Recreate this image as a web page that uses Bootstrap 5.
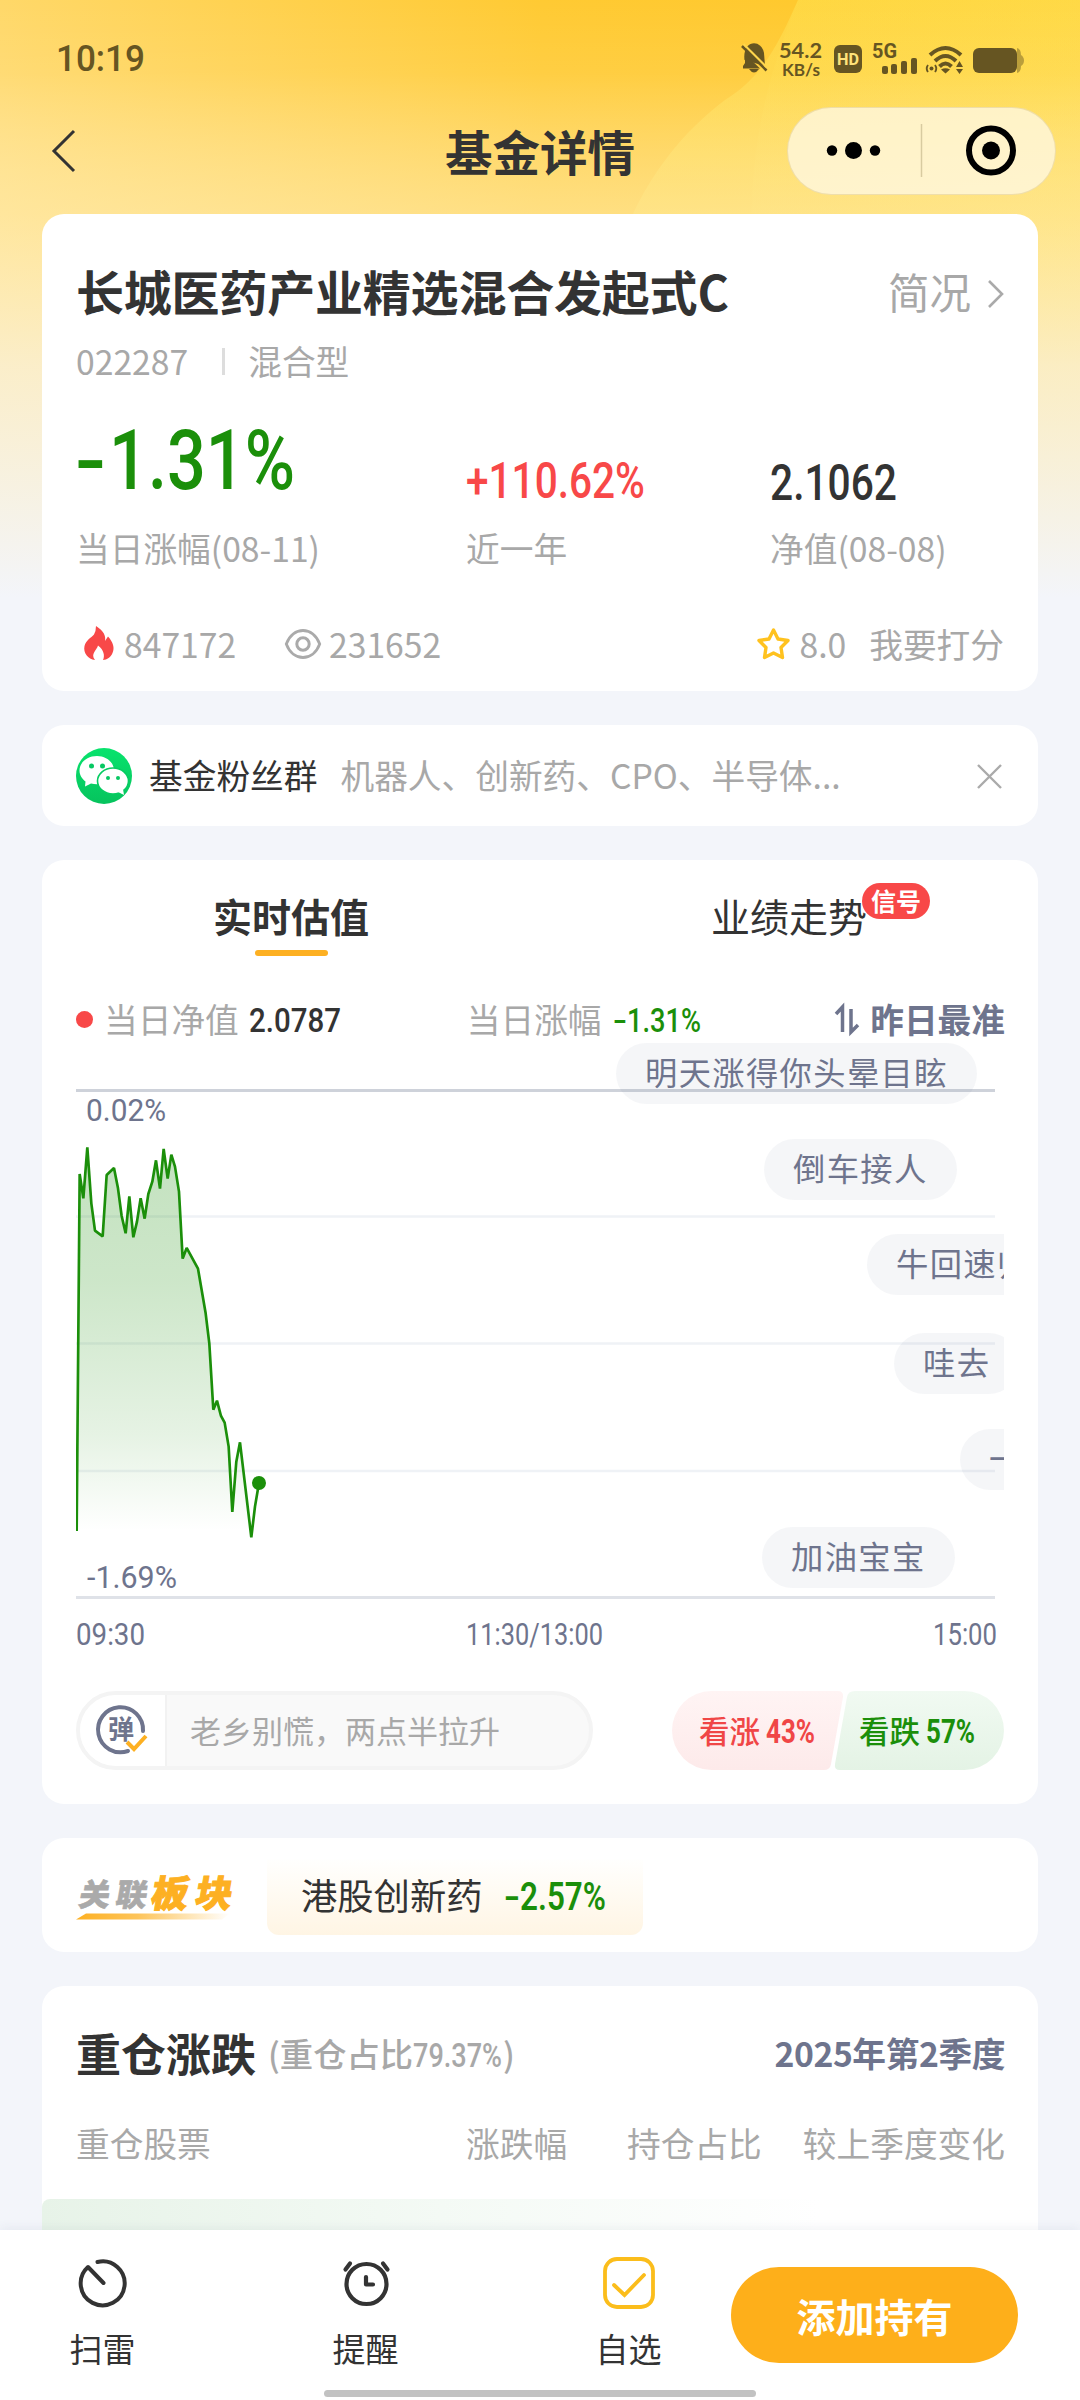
<!DOCTYPE html>
<html lang="zh-CN">
<head>
<meta charset="utf-8">
<meta name="viewport" content="width=device-width, initial-scale=1">
<title>基金详情</title>
<link href="https://cdn.jsdelivr.net/npm/bootstrap@5.3.0/dist/css/bootstrap.min.css" rel="stylesheet">
<script src="https://cdn.jsdelivr.net/npm/bootstrap@5.3.0/dist/js/bootstrap.bundle.min.js"></script>
<style>
  body{margin:0;background:#f3f5fa;font-family:"Noto Sans CJK SC",sans-serif;color:#333;font-size:33.7px;line-height:46px}
  .screen{width:1080px;height:2400px;overflow:hidden;position:relative}
  .backdrop{position:absolute;left:0;top:0;z-index:0}
  .content{position:relative;z-index:1}
  svg{display:block;flex:none;overflow:visible}
  .num text{font-family:Roboto,sans-serif;font-weight:500}
  .num.axis text{font-weight:400;fill:#6e748d}
  .statusbar{height:107px;padding:45px 0 0 57px}
  .titlebar{height:88px;padding:0 24px 0 50px}
  .page-title{font-size:47.5px;line-height:60px;font-weight:700}
  .capsule{width:269px;height:88px;border-radius:44px;background:rgba(255,248,224,.8);border:1.5px solid rgba(190,160,70,.25)}
  .panel{width:996px;margin:0 auto 34px;background:#fff;border-radius:22px;border:0;padding:0 34px}
  .panel-fund{margin-top:19px;height:477px;padding-top:38px}
  .fund-name{font-size:48px;line-height:76px;font-weight:700;letter-spacing:-.2px}
  .muted{color:#a8a8a8}
  .slate{color:#6e748d}
  .brief{font-size:41.5px;padding-top:2px}
  .metrics{height:182px}
  .metrics .lbl{height:50px;line-height:47px;margin-left:-1px}
  .panel-group{height:101px;margin-bottom:34px}
  .panel-chart{height:944px}
  .tabs{margin:0 -34px;height:112px;font-size:39px}
  .tabs .tab{width:50%;position:relative;line-height:111px;text-align:center}
  .tab.active{font-weight:700}
  .tab.active::after{content:"";position:absolute;left:213px;top:90px;width:73px;height:6px;border-radius:3px;background:#fdb022}
  .signal{position:absolute;left:322px;top:23px;width:68px;height:36px;border-radius:18px;background:#f84848;color:#fff;font-size:25px;line-height:34px;font-weight:700}
  .legend{height:46px;margin-top:25px}
  .live-dot{width:17px;height:17px;border-radius:50%;background:#f84848}
  .chart{height:562px;position:relative;overflow:hidden}
  .bullet{position:absolute;height:61px;line-height:56px;border-radius:31px;background:rgba(107,115,144,.065);color:#6e748d;padding:0 29px;font-size:32.3px;letter-spacing:1.35px;white-space:nowrap}
  .axisrow{height:58px}
  .comment{width:517px;height:79px;border-radius:40px;border:4px solid #f4f4f4;background:#f9f9f9;overflow:hidden;font-size:31px}
  .comment .mode{width:87px;height:71px;background:#fff;border-right:2px solid #f2f2f2}
  .vote{width:332px;height:79px;position:relative}
  .vote .side{position:relative;font-size:30.5px;font-weight:500}
  .vote-shape{position:absolute;left:0;top:0}
  .up{color:#f04646}.down{color:#1b8f0a}
  .panel-sector{height:114px}
  .sector-chip{width:376px;height:76px;border-radius:0 0 12px 12px;background:linear-gradient(#fffffe,#fff5e4);margin:3px 0 0 32px;padding-left:34px;font-size:36.3px}
  .panel-hold{height:500px;padding:0}
  .hold-title{font-size:45px;font-weight:700;line-height:60px}
  .hold-row{height:80px;background:linear-gradient(90deg,#e7f3e8,#f4faf5 40%,#fff 78%);border-radius:8px 0 0 0}
  .tabbar-bottom{position:absolute;left:0;bottom:0;width:1080px;height:170px;background:#fff;box-shadow:0 -2px 10px rgba(60,70,110,.07);z-index:3}
  .tool{padding-top:24px}
  .tool div{font-size:33px;line-height:46px;margin-top:15px}
  .btn-hold{width:287px;height:96px;border-radius:48px;background:#feaf1a;color:#fff;font-size:39px;font-weight:700;margin-top:37px;padding:0;line-height:88px;border:0}
  .home-line{position:absolute;left:324px;bottom:3px;width:432px;height:7px;border-radius:4px;background:#c2c2c2}
</style>
</head>
<body>
<div class="screen">
  <svg class="backdrop" width="1080" height="610" viewBox="0 0 1080 610">
    <defs>
      <linearGradient id="warm" x1="0" y1="0" x2="1" y2="0"><stop offset="0" stop-color="#ffd869"/><stop offset=".5" stop-color="#ffca33"/><stop offset=".75" stop-color="#ffc92e"/><stop offset="1" stop-color="#ffce38"/></linearGradient>
      <linearGradient id="fade" x1="0" y1="0" x2="0" y2="1"><stop offset="0" stop-color="#fff" stop-opacity="0"/><stop offset=".12" stop-color="#fff" stop-opacity=".08"/><stop offset=".35" stop-color="#fff4d0" stop-opacity=".5"/><stop offset=".6" stop-color="#faf2dc" stop-opacity=".84"/><stop offset=".98" stop-color="#f3f5fa"/></linearGradient>
      <linearGradient id="arc" x1="0" y1="0" x2="0" y2="1"><stop offset="0" stop-color="#ffe04e" stop-opacity=".55"/><stop offset="1" stop-color="#ffe04e" stop-opacity=".1"/></linearGradient>
    </defs>
    <rect width="1080" height="610" fill="url(#warm)"/>
    <path d="M798 0C780 40 765 75 725 100C685 130 640 180 615 260V610H1080V0Z" fill="url(#arc)"/>
    <path d="M798 0C762 90 748 160 752 260V610H1080V0Z" fill="url(#arc)" opacity=".3"/>
    <rect width="1080" height="610" fill="url(#fade)"/>
  </svg>

  <div class="content">
    <header>
      <div class="statusbar d-flex align-items-start">
        <svg class="num" width="87" height="26"><text x="-1" y="26" font-size="36" textLength="89" lengthAdjust="spacingAndGlyphs" fill="#665522">10:19</text></svg>
        <svg width="320" height="60" viewBox="720 20 320 60" style="margin:-25px 0 0 576px" fill="#665522">
          <path d="M744.500 60C742 40 761 38 764 53L765 66Z"/>
          <path d="M743 68.500V66L745 63V54L760 68.500ZM749 69H759Q754 76 749 69Z"/>
          <path d="M742 46L766.500 70.500" stroke="#665522" stroke-width="2.600"/>
          <path d="M743.500 44L767 67.500" stroke="#ffd64c" stroke-width="2"/>
          <text x="779" y="57.500" font-family="Lato,sans-serif" font-weight="700" font-size="21.500" textLength="43" lengthAdjust="spacingAndGlyphs">54.2</text>
          <text x="782" y="76" font-family="Lato,sans-serif" font-weight="700" font-size="17.500" textLength="38" lengthAdjust="spacingAndGlyphs">KB/s</text>
          <rect x="834" y="45" width="28" height="28" rx="6"/>
          <text x="837" y="65" font-family="Roboto,sans-serif" font-weight="700" font-size="17" fill="#ffe27a" textLength="22" lengthAdjust="spacingAndGlyphs">HD</text>
          <text x="872" y="58" font-family="Roboto,sans-serif" font-weight="700" font-size="20" textLength="25" lengthAdjust="spacingAndGlyphs">5G</text>
          <rect x="882" y="66" width="6" height="8" rx="2"/><rect x="891" y="64" width="6" height="10" rx="2"/><rect x="901" y="61" width="6" height="13" rx="2"/><rect x="911" y="58" width="6" height="16" rx="2"/>
          <g fill="none" stroke="#665522" stroke-width="4"><path d="M930 55Q945.500 41 961 55"/><path d="M935 61Q945.500 51 956 61"/><path d="M939.500 66.500Q945.500 60.500 951.500 66.500"/></g>
          <path d="M941 69.500Q945.500 67 950 69.500L945.500 73.500ZM956 67L959.500 61L963 67ZM956 69L959.500 74L963 69Z"/>
          <circle cx="931.500" cy="68.500" r="2"/>
          <path d="M928 65Q925.500 68.500 928 72M935 65Q937.500 68.500 935 72" fill="none" stroke="#665522" stroke-width="1.800"/>
          <rect x="973" y="48" width="44" height="25" rx="6"/>
          <path d="M1017 48Q1021 49 1021 55Q1024 57 1024 60.500T1021 66Q1021 72 1017 73Z" opacity=".45"/>
        </svg>
      </div>
      <div class="titlebar d-flex align-items-center">
        <svg width="26" height="44" viewBox="0 0 26 44"><path d="M24 2L4 22L24 42" fill="none" stroke="#333" stroke-width="3"/></svg>
        <div class="page-title" style="margin-left:369px">基金详情</div>
        <div class="capsule ms-auto">
          <svg width="266" height="85" viewBox="788 109 266 85"><circle cx="832" cy="151.500" r="5.200"/><circle cx="853.500" cy="151.500" r="8.500"/><circle cx="875" cy="151.500" r="5.200"/><path d="M921.500 125V178" stroke="#d8cba0" stroke-width="1.500"/><circle cx="991" cy="151.500" r="22" fill="none" stroke="#000" stroke-width="6"/><circle cx="991" cy="151.500" r="9"/></svg>
        </div>
      </div>
    </header>

    <section class="card panel panel-fund">
      <div class="d-flex justify-content-between align-items-center">
        <div class="fund-name">长城医药产业精选混合发起式C</div>
        <div class="d-flex align-items-center muted brief">简况
          <svg width="17" height="30" class="ms-3 me-0" viewBox="0 0 17 30" style="margin-top:5px"><path d="M2 2L15 15L2 28" fill="none" stroke="#aaa" stroke-width="2.600"/></svg></div>
      </div>
      <div class="d-flex align-items-center muted" style="height:64px;padding-top:2px">
        <span>022287</span><span style="width:3px;height:27px;background:#ddd;margin:0 23px 0 34px"></span><span>混合型</span>
      </div>
      <div class="metrics d-flex align-items-end muted">
        <div style="width:391px">
          <svg class="num" width="217" height="60" style="margin:0 0 35px 3px"><text x="-4" y="60" font-size="84" textLength="31" lengthAdjust="spacingAndGlyphs" fill="#1b8f0a" style="font-weight:500">-</text><text x="30" y="60" font-size="84" textLength="186" lengthAdjust="spacingAndGlyphs" fill="#1b8f0a" style="font-weight:500">1.31%</text></svg>
          <div class="lbl" style="margin-left:0">当日涨幅(08-11)</div></div>
        <div style="width:304px">
          <svg class="num" width="177" height="35" style="margin-bottom:26px"><text x="-1" y="35" font-size="49.500" textLength="179" lengthAdjust="spacingAndGlyphs" fill="#f84848">+110.62%</text></svg>
          <div class="lbl">近一年</div></div>
        <div>
          <svg class="num" width="125" height="35" style="margin-bottom:24px"><text x="-1" y="35" font-size="49.500" textLength="127" lengthAdjust="spacingAndGlyphs" fill="#333">2.1062</text></svg>
          <div class="lbl">净值(08-08)</div></div>
      </div>
      <div class="d-flex align-items-center muted" style="height:60px;margin-top:40px">
        <svg width="30" height="35" viewBox="0 0 30 35" style="margin:-2px 10px 0 8px"><path d="M12 0C20 5 22 10 21 15L24 10.500C29 16 31 22 28.500 27C27 31 23 34 19 34C21 30 20 24 14 19.500C13 24 6 28 11 34C4 33 -1 27 .5 20C2 14 7 12 10 8.500Q12 5 12 0Z" fill="#f84848"/></svg>
        <span style="width:161px">847172</span>
        <svg width="36" height="28" viewBox="0 0 36 28" fill="none" stroke="#aaa" stroke-width="2.800"><path d="M1.300 14C8 -4 28 -4 34.700 14C28 32 8 32 1.300 14Z"/><circle cx="18" cy="14" r="6.200" stroke-width="3"/></svg>
        <span style="margin-left:8px">231652</span>
        <svg class="ms-auto" width="33" height="32" viewBox="0 0 33 32"><path d="M16.500 2L21 11L31 12.500L24 19.500L25.500 29.500L16.500 25L7.500 29.500L9 19.500L2 12.500L12 11Z" fill="none" stroke="#ffc21f" stroke-width="3.400" stroke-linejoin="round"/></svg>
        <span style="margin:0 23px 0 9px">8.0</span><span>我要打分</span>
      </div>
    </section>

    <section class="card panel panel-group flex-row align-items-center">
      <svg width="56" height="56" viewBox="0 0 56 56"><defs><linearGradient id="wx" x2="0" y2="1"><stop stop-color="#08e36d"/><stop offset="1" stop-color="#06c35d"/></linearGradient></defs>
        <circle cx="28" cy="28" r="28" fill="url(#wx)"/><path d="M21 8C11 8 3.500 14.500 3.500 22.500C3.500 27 6 31 9.500 33.500L9 38.500L15 35.500C28 38.500 38 31 38 22.500C38 14 30 8 21 8Z" fill="#fff"/>
        <ellipse cx="37" cy="33" rx="15.500" ry="13" fill="#fff" stroke="#06cc62" stroke-width="1.600"/><path d="M42 44L48 47L47 41Z" fill="#fff"/>
        <g fill="#07c862"><circle cx="15.500" cy="18" r="2.500"/><circle cx="26.500" cy="18" r="2.500"/><circle cx="32" cy="30" r="2"/><circle cx="42" cy="30" r="2"/></g></svg>
      <span style="margin:-1px 0 0 17px">基金粉丝群</span>
      <span class="muted" style="margin:-1px 0 0 23px">机器人、创新药、CPO、半导体...</span>
      <svg class="ms-auto" width="25" height="25" style="margin:2px 2px 0 0"><path d="M1 1L24 24M24 1L1 24" stroke="#aaa" stroke-width="2.400"/></svg>
    </section>

    <section class="card panel panel-chart">
      <div class="tabs d-flex">
        <div class="tab active">实时估值</div>
        <div class="tab">业绩走势<span class="signal">信号</span></div>
      </div>
      <div class="legend d-flex align-items-center">
        <span class="live-dot" style="margin-top:-2px"></span><span class="muted" style="margin:-3px 11px 0 11px">当日净值</span>
        <svg class="num" width="90" height="24"><text x="-1" y="24" font-size="34" textLength="92" lengthAdjust="spacingAndGlyphs" fill="#333">2.0787</text></svg>
        <span class="muted" style="margin:-3px 12px 0 127px">当日涨幅</span>
        <svg class="num" width="87" height="24"><text x="-1" y="24" font-size="34" textLength="14" lengthAdjust="spacingAndGlyphs" fill="#1b8f0a">-</text><text x="13" y="24" font-size="34" textLength="74" lengthAdjust="spacingAndGlyphs" fill="#1b8f0a">1.31%</text></svg>
        <svg class="ms-auto" width="26" height="32" viewBox="0 0 26 32" fill="none" stroke="#6e748d" stroke-width="3.500"><path d="M2 10L8.500 3V28M17 5V28L24 21"/></svg>
        <span class="slate fw-bold" style="margin:-3px -1px 0 10px">昨日最准</span>
      </div>
      <div class="chart">
        <svg width="928" height="562" viewBox="0 0 928 562">
          <defs><linearGradient id="area" x2="0" y2="1"><stop stop-color="#1b8f0a" stop-opacity=".26"/><stop offset=".35" stop-color="#1b8f0a" stop-opacity=".22"/><stop offset=".75" stop-color="#1b8f0a" stop-opacity=".11"/><stop offset="1" stop-color="#1b8f0a" stop-opacity="0"/></linearGradient></defs>
          <g stroke-width="2.500"><path d="M0 47.500H919" stroke="#ced2da" stroke-width="3"/><path d="M0 173.500H919M0 300.500H919M0 428H919" stroke="#eff2f6"/><path d="M0 554.500H919" stroke="#dfe2e8" stroke-width="3"/></g>
          <g transform="translate(-36 37) scale(.3333)">
            <path fill="url(#area)" d="M110 1353L119 282L130 355L142 202L154 370L165 452L188 469L200 285L222 264L234 325L245 408L257 460L268 349L280 472L291 425L302 355L314 416L325 342L337 305L348 241L360 326L371 207L383 296L394 224L405 260L417 335L428 536L440 504L474 566L497 700L508 790L520 989L531 962L543 1008L554 1028L566 1100L577 1296L589 1145L600 1087L632 1353Z"/>
            <path fill="none" stroke="#1b8f0a" stroke-width="8" stroke-linejoin="bevel" d="M110 1353L119 282L130 355L142 202L154 370L165 452L188 469L200 285L222 264L234 325L245 408L257 460L268 349L280 472L291 425L302 355L314 416L325 342L337 305L348 241L360 326L371 207L383 296L394 224L405 260L417 335L428 536L440 504L474 566L497 700L508 790L520 989L531 962L543 1008L554 1028L566 1100L577 1296L589 1145L600 1087L634 1372L645 1280L657 1209"/>
            <circle cx="657" cy="1209" r="21" fill="#1b8f0a"/>
          </g>
          <g font-family="Roboto,sans-serif" font-size="30.500" fill="#6e748d"><text x="10" y="78" textLength="80" lengthAdjust="spacingAndGlyphs">0.02%</text><text x="11" y="545" textLength="90" lengthAdjust="spacingAndGlyphs">-1.69%</text></g>
        </svg>
        <span class="bullet" style="left:540px;top:0">明天涨得你头晕目眩</span>
        <span class="bullet" style="left:688px;top:96px">倒车接人</span>
        <span class="bullet" style="left:791px;top:191px">牛回速归</span>
        <span class="bullet" style="left:818px;top:290px">哇去</span>
        <span class="bullet" style="left:884px;top:386px">一起</span>
        <span class="bullet" style="left:686px;top:484px">加油宝宝</span>
      </div>
      <div class="axisrow d-flex align-items-center">
        <svg class="num axis" width="69" height="22"><text y="22" font-size="31" textLength="69" lengthAdjust="spacingAndGlyphs">09:30</text></svg>
        <svg class="num axis" width="137" height="22" style="margin-left:321px"><text y="22" font-size="31" textLength="137" lengthAdjust="spacingAndGlyphs">11:30/13:00</text></svg>
        <svg class="num axis" width="64" height="22" style="margin-left:330px"><text y="22" font-size="31" textLength="64" lengthAdjust="spacingAndGlyphs">15:00</text></svg>
      </div>
      <div class="d-flex justify-content-between" style="margin-top:28px">
        <div class="comment d-flex align-items-center muted">
          <div class="mode d-flex"><svg width="87" height="71" viewBox="80 1695 87 71"><path d="M143 1731A22.500 22.500 0 1 0 128 1751" fill="none" stroke="#6e748d" stroke-width="4" stroke-linecap="round"/><text x="108" y="1738.500" font-size="26" font-weight="700" fill="#6e748d">弹</text><path d="M127 1742L134 1749L146 1736" fill="none" stroke="#fdb022" stroke-width="4"/></svg></div>
          <span style="margin:-2px 0 0 23px">老乡别慌，两点半拉升</span>
        </div>
        <div class="vote d-flex align-items-center">
          <svg class="vote-shape" width="332" height="79" viewBox="0 0 332 79"><defs><linearGradient id="vr" x2="0" y2="1"><stop stop-color="#fff4f4"/><stop offset="1" stop-color="#fdeaea"/></linearGradient><linearGradient id="vg" x2="0" y2="1"><stop stop-color="#f1faf2"/><stop offset="1" stop-color="#e4f3e5"/></linearGradient></defs>
            <path d="M39.500 0H166Q171.500 0 171 6L159 73Q158 79 152 79H39.500A39.500 39.500 0 0 1 39.500 0Z" fill="url(#vr)"/><path d="M183 0H292.500A39.500 39.500 0 0 1 292.500 79H168Q162 79 163 73L175 6Q176 0 183 0Z" fill="url(#vg)"/></svg>
          <div class="side up d-flex align-items-center" style="width:160px;padding-left:27px"><span style="margin-top:-1px">看涨</span><svg class="num" width="49" height="24" style="margin-left:6px"><text y="24" font-size="34" textLength="49" lengthAdjust="spacingAndGlyphs" fill="#f04646" style="font-weight:700">43%</text></svg></div>
          <div class="side down d-flex align-items-center" style="padding-left:27px"><span style="margin-top:-1px">看跌</span><svg class="num" width="49" height="24" style="margin-left:6px"><text y="24" font-size="34" textLength="49" lengthAdjust="spacingAndGlyphs" fill="#1b8f0a" style="font-weight:700">57%</text></svg></div>
        </div>
      </div>
    </section>

    <section class="card panel panel-sector flex-row align-items-center">
      <svg width="159" height="50" viewBox="76 1876 159 50" style="margin-top:8px"><defs><linearGradient id="ul"><stop stop-color="#fdb022"/><stop offset=".4" stop-color="#fdc45a"/><stop offset="1" stop-color="#fff"/></linearGradient></defs>
        <g transform="translate(79.500 0) skewX(-10) translate(334.500 0)" font-weight="900"><text x="0" y="1908" font-size="31" fill="#aaa" textLength="68" stroke="#aaa" stroke-width=".6">关联</text><text x="72" y="1909" font-size="37" fill="#fdb022" textLength="81" stroke="#fdb022" stroke-width="1">板块</text></g>
        <path d="M76 1921.500L86 1915.500H230L222 1921.500Z" fill="url(#ul)"/></svg>
      <div class="sector-chip d-flex align-items-center"><span style="margin-top:-5px">港股创新药</span><svg class="num" width="101" height="28" style="margin-left:23px"><text x="-1" y="27" font-size="39" textLength="16" lengthAdjust="spacingAndGlyphs" fill="#1b8f0a">-</text><text x="15" y="27" font-size="39" textLength="86" lengthAdjust="spacingAndGlyphs" fill="#1b8f0a" style="font-weight:600">2.57%</text></svg></div>
    </section>

    <section class="card panel panel-hold">
      <div class="d-flex align-items-center" style="height:60px;margin:37px 33px 0 34px">
        <span class="hold-title">重仓涨跌</span>
        <span class="muted d-flex align-items-center" style="margin-left:12px;font-weight:500;font-size:33.3px">(重仓占比<svg class="num" width="90" height="24" style="margin-top:4px"><text y="24" font-size="34" textLength="89" lengthAdjust="spacingAndGlyphs" fill="#a8a8a8">79.37%</text></svg><span>)</span></span>
        <span class="slate fw-bold ms-auto" style="letter-spacing:-.4px">2025年第2季度</span>
      </div>
      <div class="d-flex muted" style="margin:37px 33px 0 34px">
        <span style="width:390px">重仓股票</span><span style="width:161px">涨跌幅</span><span>持仓占比</span><span class="ms-auto">较上季度变化</span>
      </div>
      <div class="hold-row" style="margin-top:33px"></div>
    </section>
  </div>

  <nav class="tabbar-bottom d-flex align-items-start">
    <div class="tool d-flex flex-column align-items-center" style="width:205px">
      <svg width="56" height="56" viewBox="0 0 56 56" fill="none" stroke="#333" stroke-width="4" stroke-linecap="round" stroke-linejoin="round"><path d="M22.500 8A22 22 0 1 1 13 13L28.500 29"/></svg><div>扫雷</div></div>
    <div class="tool d-flex flex-column align-items-center" style="width:321px">
      <svg width="56" height="56" viewBox="0 0 56 56" fill="none" stroke="#333" stroke-width="4.200" stroke-linecap="round" stroke-linejoin="round"><circle cx="28.500" cy="30" r="20"/><path d="M28 23V30.500H35M7.500 15.500L12 9.500M49.500 15.500L45 9.500"/></svg><div>提醒</div></div>
    <div class="tool d-flex flex-column align-items-center" style="width:205px">
      <svg width="56" height="56" viewBox="0 0 56 56" fill="none" stroke="#fbbd1b" stroke-width="3.800" stroke-linecap="round"><rect x="4" y="5" width="48" height="48" rx="12"/><path d="M13 31L23.500 41L43 21" /></svg><div>自选</div></div>
    <button type="button" class="btn btn-hold">添加持有</button>
    <div class="home-line"></div>
  </nav>
</div>
</body>
</html>
